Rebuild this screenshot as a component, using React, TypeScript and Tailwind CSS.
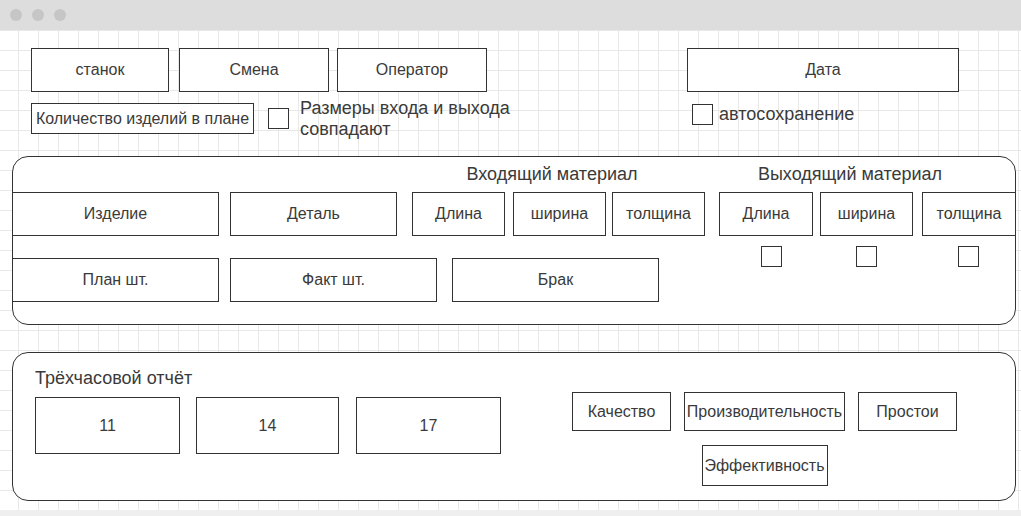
import type { ReactNode } from "react";

function Box({ className, children }: { className: string; children: ReactNode }) {
  return (
    <div
      className={`flex shrink-0 items-center justify-center border border-[#333] bg-white text-[16px] text-[#3a3a3a] ${className}`}
    >
      {children}
    </div>
  );
}

function Check({ className = "" }: { className?: string }) {
  return <div className={`h-[21px] w-[21px] shrink-0 border border-[#333] bg-white ${className}`} />;
}

export default function App() {
  return (
    <div className="flex h-[516px] w-[1021px] flex-col overflow-hidden bg-white font-['Liberation_Sans',Arial,sans-serif] text-[#3a3a3a]">
      {/* window bar */}
      <div className="flex h-[30px] shrink-0 items-center gap-[10px] bg-[#dddddd] pl-[10px]">
        <span className="h-[12px] w-[12px] rounded-full bg-[#c6c6c6]" />
        <span className="h-[12px] w-[12px] rounded-full bg-[#c6c6c6]" />
        <span className="h-[12px] w-[12px] rounded-full bg-[#c6c6c6]" />
      </div>

      {/* canvas */}
      <div className="flex-1 bg-white bg-[linear-gradient(to_right,#e8e8e8_1px,transparent_1px),linear-gradient(to_bottom,#e8e8e8_1px,transparent_1px)] bg-[length:20px_20px] bg-[position:18px_0px]">
        <div className="flex pl-[31px] pt-[18px]">
          <div className="flex w-[456px] shrink-0 flex-col">
            <div className="flex">
              <Box className="h-[44px] w-[138px]">станок</Box>
              <Box className="ml-[10px] h-[44px] w-[150px]">Смена</Box>
              <Box className="ml-[8px] h-[44px] w-[150px]">Оператор</Box>
            </div>
            <div className="mt-[11px] flex h-[31px] items-center whitespace-nowrap">
              <Box className="h-[31px] w-[223px]">Количество изделий в плане</Box>
              <Check className="ml-[14px]" />
              <div className="ml-[11px] text-[18px] leading-[21px]">
                Размеры входа и выхода
                <br />
                совпадают
              </div>
            </div>
          </div>
          <div className="ml-[200px] flex flex-col">
            <Box className="h-[44px] w-[272px]">Дата</Box>
            <div className="mt-[9px] flex items-center pl-[5px]">
              <Check />
              <span className="ml-[6px] text-[18px]">автосохранение</span>
            </div>
          </div>
        </div>

        {/* materials panel */}
        <div className="ml-[12px] mt-[22px] h-[169px] w-[1004px] rounded-[16px] border border-[#333] bg-white">
          <div className="-mx-px">
            <div className="flex h-[35px] items-center text-[18px]">
              <div className="ml-[400px] w-[280px] text-center">Входящий материал</div>
              <div className="ml-[18px] w-[280px] text-center">Выходящий материал</div>
            </div>
            <div className="flex h-[44px]">
              <Box className="h-[44px] w-[207px]">Изделие</Box>
              <Box className="ml-[11px] h-[44px] w-[167px]">Деталь</Box>
              <Box className="ml-[15px] h-[44px] w-[93px]">Длина</Box>
              <Box className="ml-[8px] h-[44px] w-[93px]">ширина</Box>
              <Box className="ml-[6px] h-[44px] w-[93px]">толщина</Box>
              <Box className="ml-[14px] h-[44px] w-[94px]">Длина</Box>
              <Box className="ml-[7px] h-[44px] w-[93px]">ширина</Box>
              <Box className="ml-[9px] h-[44px] w-[94px]">толщина</Box>
            </div>
            <div className="flex items-start">
              <div className="mt-[22px] flex">
                <Box className="h-[44px] w-[207px]">План шт.</Box>
                <Box className="ml-[11px] h-[44px] w-[207px]">Факт шт.</Box>
                <Box className="ml-[15px] h-[44px] w-[207px]">Брак</Box>
              </div>
              <Check className="ml-[102px] mt-[10px]" />
              <Check className="ml-[74px] mt-[10px]" />
              <Check className="ml-[81px] mt-[10px]" />
            </div>
          </div>
        </div>

        {/* report panel */}
        <div className="ml-[12px] mt-[27px] flex h-[149px] w-[1004px] rounded-[16px] border border-[#333] bg-white">
          <div className="flex flex-col pl-[22px]">
            <div className="mt-[15px] h-[20px] text-[18px] leading-[20px]">Трёхчасовой отчёт</div>
            <div className="mt-[9px] flex">
              <Box className="h-[57px] w-[145px]">11</Box>
              <Box className="ml-[16px] h-[57px] w-[143px]">14</Box>
              <Box className="ml-[17px] h-[57px] w-[145px]">17</Box>
            </div>
          </div>
          <div className="ml-[71px] mt-[39px] flex flex-col items-center">
            <div className="flex">
              <Box className="h-[39px] w-[99px]">Качество</Box>
              <Box className="ml-[13px] h-[39px] w-[161px]">Производительность</Box>
              <Box className="ml-[13px] h-[39px] w-[99px]">Простои</Box>
            </div>
            <Box className="mt-[14px] h-[41px] w-[126px]">Эффективность</Box>
          </div>
        </div>
      </div>

      <div className="h-[6px] shrink-0 bg-[#efefef]" />
    </div>
  );
}
